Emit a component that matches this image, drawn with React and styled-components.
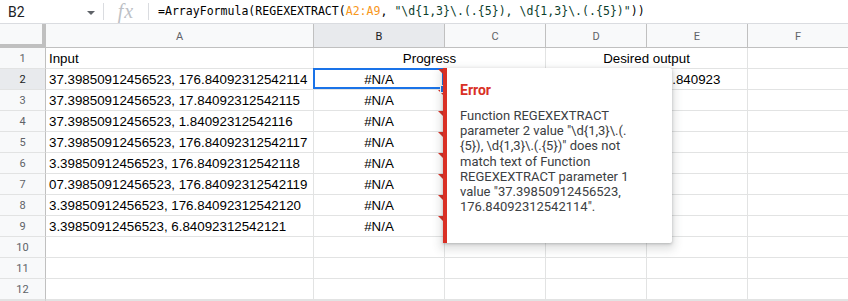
import React from "react";
import styled, { createGlobalStyle, css } from "styled-components";

const GlobalStyle = createGlobalStyle`
  html, body { margin: 0; padding: 0; background: #fff; overflow: hidden; }
  body { font-family: Roboto, "Liberation Sans", Arial, sans-serif; }
`;

const Page = styled.div`
  width: 848px;
  height: 301px;
  overflow: hidden;
  display: flex;
  flex-direction: column;
`;

const FormulaBar = styled.div`
  display: flex;
  align-items: center;
  height: 23px;
  flex: 0 0 23px;
  border-bottom: 1px solid #dadce0;
  background: #fff;
`;

const NameBox = styled.div`
  display: flex;
  align-items: center;
  justify-content: space-between;
  width: 103px;
  box-sizing: border-box;
  padding: 0 8px 0 8px;
  font-family: Roboto, "Liberation Sans", sans-serif;
  font-size: 14px;
  color: #202124;
`;

const Caret = styled.span`
  width: 0;
  height: 0;
  border-left: 4px solid transparent;
  border-right: 4px solid transparent;
  border-top: 4px solid #5f6368;
  margin-top: 2px;
`;

const Divider = styled.div`
  width: 1px;
  height: 17px;
  background: #dadce0;
`;

const Fx = styled.div`
  width: 44px;
  text-align: center;
  font-family: "Liberation Serif", "DejaVu Serif", serif;
  font-style: italic;
  font-size: 20px;
  letter-spacing: 1px;
  color: #bdc1c6;
  line-height: 23px;
`;

const Formula = styled.div`
  padding-left: 9px;
  font-family: "DejaVu Sans Mono", "Liberation Mono", monospace;
  font-size: 11.56px;
  color: #000;
  white-space: pre;
  line-height: 23px;
`;

const Tok = styled.span`
  color: ${(p) => p.$c};
`;

const SheetWrap = styled.div`
  position: relative;
  flex: 1;
`;

const Grid = styled.div`
  display: grid;
  grid-template-columns: 46px 268px 131px 101px 101px 101px 101px;
  grid-template-rows: 24px repeat(12, 21px);
`;

const Cell = styled.div`
  position: relative;
  box-sizing: border-box;
  border-right: 1px solid #e2e3e3;
  border-bottom: 1px solid #e2e3e3;
  font-family: "Liberation Sans", Arial, sans-serif;
  font-size: 13.33px;
  color: #000;
  display: flex;
  align-items: center;
  padding: 0 3px;
  white-space: nowrap;
  overflow: visible;
  background: transparent;
  justify-content: ${(p) => (p.$center ? "center" : "flex-start")};
  ${(p) => p.$span && css`grid-column: span ${p.$span};`}
  ${(p) =>
    p.$error &&
    css`
      &::after {
        content: "";
        position: absolute;
        top: 0;
        right: 0;
        width: 0;
        height: 0;
        border-left: 6px solid transparent;
        border-top: 6px solid #d93025;
      }
    `}
  ${(p) =>
    p.$selected &&
    css`
      z-index: 2;
      &::before {
        content: "";
        position: absolute;
        top: -1px;
        left: -1px;
        width: calc(100% + 1px);
        height: calc(100% + 1px);
        border: 2px solid #1a73e8;
        box-sizing: border-box;
        pointer-events: none;
      }
    `}
`;

const FillHandle = styled.span`
  position: absolute;
  right: -4px;
  bottom: -4px;
  width: 6px;
  height: 6px;
  background: #1a73e8;
  border: 1px solid #fff;
  z-index: 3;
`;

const ColHead = styled.div`
  box-sizing: border-box;
  background: ${(p) => (p.$active ? "#e8eaed" : "#f8f9fa")};
  border-right: 1px solid #c0c0c0;
  border-bottom: 1px solid #c0c0c0;
  display: flex;
  align-items: center;
  justify-content: center;
  font-family: Roboto, "Liberation Sans", sans-serif;
  font-size: 11px;
  color: ${(p) => (p.$active ? "#202124" : "#5f6368")};
  padding-top: 1px;
`;

const Corner = styled.div`
  box-sizing: border-box;
  background: #f8f9fa;
  border-right: 4px solid #c0c0c0;
  border-bottom: 4px solid #c0c0c0;
`;

const RowHead = styled.div`
  box-sizing: border-box;
  background: ${(p) => (p.$active ? "#e8eaed" : "#f8f9fa")};
  border-right: 1px solid #c0c0c0;
  border-bottom: 1px solid #e2e3e3;
  display: flex;
  align-items: center;
  justify-content: center;
  font-family: Roboto, "Liberation Sans", sans-serif;
  font-size: 11px;
  color: ${(p) => (p.$active ? "#202124" : "#5f6368")};
`;

const Popup = styled.div`
  position: absolute;
  top: 44px;
  left: 443px;
  width: 229px;
  height: 175px;
  box-sizing: border-box;
  background: #fff;
  border-left: 4px solid #d93025;
  border-radius: 0 2px 2px 0;
  box-shadow: 0 1px 3px rgba(60, 64, 67, 0.3), 0 4px 8px 3px rgba(60, 64, 67, 0.15);
  padding: 14px 12px 0 13px;
  z-index: 10;
  font-family: Roboto, "Liberation Sans", sans-serif;
`;

const PopupTitle = styled.div`
  font-size: 14px;
  font-weight: 700;
  color: #d93025;
  line-height: 16px;
  margin-bottom: 10px;
`;

const PopupBody = styled.div`
  font-size: 13px;
  color: #3c4043;
  line-height: 15.2px;
  white-space: nowrap;
`;

const dataA = [
  "37.39850912456523, 176.84092312542114",
  "37.39850912456523, 17.84092312542115",
  "37.39850912456523, 1.84092312542116",
  "37.39850912456523, 176.84092312542117",
  "3.39850912456523, 176.84092312542118",
  "07.39850912456523, 176.84092312542119",
  "3.39850912456523, 176.84092312542120",
  "3.39850912456523, 6.84092312542121",
];

const cols = ["A", "B", "C", "D", "E", "F"];

export default function App() {
  const rows = [];
  rows.push(
    <React.Fragment key="r1">
      <RowHead>1</RowHead>
      <Cell>Input</Cell>
      <Cell $span={2} $center>Progress</Cell>
      <Cell $span={2} $center>Desired output</Cell>
      <Cell />
    </React.Fragment>
  );
  dataA.forEach((a, i) => {
    const n = i + 2;
    const sel = n === 2;
    rows.push(
      <React.Fragment key={"r" + n}>
        <RowHead $active={sel}>{n}</RowHead>
        <Cell>{a}</Cell>
        <Cell $center $error $selected={sel}>
          #N/A
          {sel && <FillHandle />}
        </Cell>
        <Cell />
        <Cell />
        <Cell>{n === 2 ? "176.840923" : ""}</Cell>
        <Cell />
      </React.Fragment>
    );
  });
  for (let n = 10; n <= 13; n++) {
    rows.push(
      <React.Fragment key={"r" + n}>
        <RowHead>{n < 13 ? n : ""}</RowHead>
        {cols.map((c) => (
          <Cell key={c} />
        ))}
      </React.Fragment>
    );
  }

  return (
    <Page>
      <GlobalStyle />
      <FormulaBar>
        <NameBox>
          <span>B2</span>
          <Caret />
        </NameBox>
        <Divider />
        <Fx>fx</Fx>
        <Divider />
        <Formula>
          <Tok $c="#000">=ArrayFormula(REGEXEXTRACT(</Tok>
          <Tok $c="#f7981d">A2:A9</Tok>
          <Tok $c="#000">, </Tok>
          <Tok $c="#0b3d2c">{'"\\d{1,3}\\.(.{5}), \\d{1,3}\\.(.{5})"'}</Tok>
          <Tok $c="#000">))</Tok>
        </Formula>
      </FormulaBar>
      <SheetWrap>
        <Grid>
          <Corner />
          {cols.map((c) => (
            <ColHead key={c} $active={c === "B"}>
              {c}
            </ColHead>
          ))}
          {rows}
        </Grid>
        <Popup>
          <PopupTitle>Error</PopupTitle>
          <PopupBody>
            Function REGEXEXTRACT
            <br />
            {'parameter 2 value "\\d{1,3}\\.(.'}
            <br />
            {'{5}), \\d{1,3}\\.(.{5})" does not'}
            <br />
            match text of Function
            <br />
            REGEXEXTRACT parameter 1
            <br />
            {'value "37.39850912456523,'}
            <br />
            {'176.84092312542114".'}
          </PopupBody>
        </Popup>
      </SheetWrap>
    </Page>
  );
}
